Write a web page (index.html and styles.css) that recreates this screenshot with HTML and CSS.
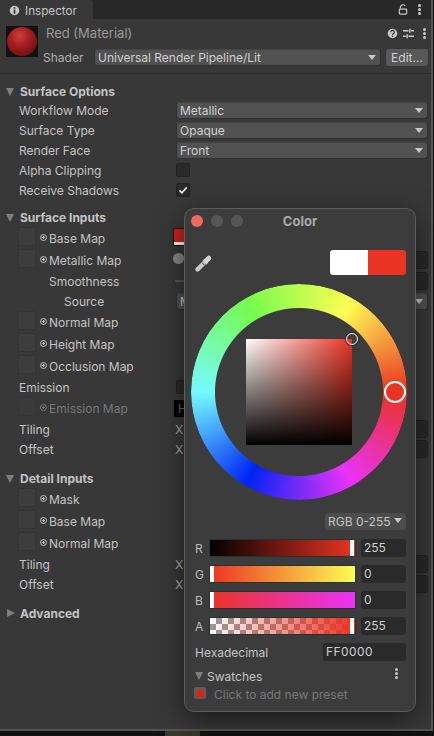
FILE: index.html
```html
<!DOCTYPE html>
<html lang="en">
<head>
    <meta charset="UTF-8">
    <title>Inspector</title>
    <link rel="stylesheet" href="styles.css">
</head>
<body>

<div class="panel">
    <div class="tabbar">
        <div class="tab">
            <svg class="tab-icon" viewBox="0 0 12 12"><circle cx="6" cy="6" r="5.2" fill="#c8c8c8"/><rect x="5.1" y="2.3" width="1.8" height="1.8" fill="#333"/><rect x="5.1" y="5" width="1.8" height="4.6" fill="#333"/></svg>
            <span>Inspector</span>
        </div>
        <div class="tab-tools">
            <svg class="lock" viewBox="0 0 10 12"><path d="M2.2 5V3.4a2.8 2.8 0 0 1 5.2-1.2" fill="none" stroke="#c8c8c8" stroke-width="1.3"/><rect x="1" y="5.6" width="8" height="5.4" rx=".8" fill="none" stroke="#c8c8c8" stroke-width="1.3"/></svg>
            <div class="dots"><i></i><i></i><i></i></div>
        </div>
    </div>

    <div class="mat-header">
        <div class="preview"><div class="ball"></div></div>
        <div class="mat-main">
            <div class="mat-title">
                <span>Red (Material)</span>
                <div class="mat-tools">
                    <svg class="help" viewBox="0 0 12 12"><circle cx="6" cy="6" r="5.2" fill="#c8c8c8"/><path d="M4.2 4.7a1.9 1.9 0 1 1 2.7 1.6c-.6.3-.9.6-.9 1.2" fill="none" stroke="#333" stroke-width="1.3"/><rect x="5.3" y="8.2" width="1.4" height="1.4" fill="#333"/></svg>
                    <svg class="sliders" viewBox="0 0 12 12"><path d="M0 3h6M9 3h3M0 9h3M6 9h6" stroke="#c8c8c8" stroke-width="1.6"/><path d="M7.5 .8v4.4M4.5 6.8v4.4" stroke="#c8c8c8" stroke-width="1.6"/></svg>
                    <div class="dots"><i></i><i></i><i></i></div>
                </div>
            </div>
            <div class="shader-row">
                <span class="shader-label">Shader</span>
                <div class="dropdown shader-drop">Universal Render Pipeline/Lit<b class="arrow"></b></div>
                <div class="btn">Edit...</div>
            </div>
        </div>
    </div>

    <section class="group">
        <h3 class="foldout">Surface Options</h3>
        <div class="row"><label>Workflow Mode</label><div class="dropdown">Metallic<b class="arrow"></b></div></div>
        <div class="row"><label>Surface Type</label><div class="dropdown">Opaque<b class="arrow"></b></div></div>
        <div class="row"><label>Render Face</label><div class="dropdown">Front<b class="arrow"></b></div></div>
        <div class="row"><label>Alpha Clipping</label><div class="check"></div></div>
        <div class="row"><label>Receive Shadows</label><div class="check"><svg viewBox="0 0 10 10"><path d="M1.5 5.4l2.4 2.4 4.8-5.4" fill="none" stroke="#eee" stroke-width="1.6"/></svg></div></div>
    </section>

    <section class="group inputs">
        <h3 class="foldout">Surface Inputs</h3>
        <div class="tex-row"><div class="thumb"></div><i class="picker"></i><label>Base Map</label><div class="control"><div class="color-field"></div></div></div>
        <div class="tex-row"><div class="thumb"></div><i class="picker"></i><label>Metallic Map</label><div class="control"><i class="knob"></i><div class="num"></div></div></div>
        <div class="sub-row"><label>Smoothness</label><div class="control"><i class="track"></i><div class="num"></div></div></div>
        <div class="sub-row source"><label>Source</label><div class="dropdown">M<b class="arrow"></b></div></div>
        <div class="tex-row"><div class="thumb"></div><i class="picker"></i><label>Normal Map</label></div>
        <div class="tex-row"><div class="thumb"></div><i class="picker"></i><label>Height Map</label></div>
        <div class="tex-row"><div class="thumb"></div><i class="picker"></i><label>Occlusion Map</label></div>
        <div class="row"><label>Emission</label><div class="check"></div></div>
        <div class="tex-row dim"><div class="thumb"></div><i class="picker"></i><label>Emission Map</label><div class="control"><div class="hdr">H</div></div></div>
        <div class="row"><label>Tiling</label><div class="vec"><span>X</span><div class="num"></div></div></div>
        <div class="row"><label>Offset</label><div class="vec"><span>X</span><div class="num"></div></div></div>
    </section>

    <section class="group detail">
        <h3 class="foldout">Detail Inputs</h3>
        <div class="tex-row"><div class="thumb"></div><i class="picker"></i><label>Mask</label></div>
        <div class="tex-row"><div class="thumb"></div><i class="picker"></i><label>Base Map</label></div>
        <div class="tex-row"><div class="thumb"></div><i class="picker"></i><label>Normal Map</label></div>
        <div class="row"><label>Tiling</label><div class="vec"><span>X</span><div class="num"></div></div></div>
        <div class="row"><label>Offset</label><div class="vec"><span>X</span><div class="num"></div></div></div>
    </section>

    <section class="group advanced">
        <h3 class="foldout closed">Advanced</h3>
    </section>
</div>

<div class="strip"><i></i><i></i><i></i></div>

<div class="picker-win">
    <div class="win-title">
        <div class="lights"><i class="close"></i><i></i><i></i></div>
        <strong>Color</strong>
    </div>

    <div class="win-top">
        <svg class="dropper" viewBox="0 0 18 18">
            <path d="M2.6 15.4L10 8" stroke="#c8c8c8" stroke-width="4.4" stroke-linecap="round"/>
            <path d="M8.2 5.8l4 4" stroke="#b4b4b4" stroke-width="2.6"/>
            <path d="M11.2 6.8l2.6-2.6" stroke="#d4d4d4" stroke-width="5" stroke-linecap="round"/>
            <path d="M7 8.6l2.4 2.4" stroke="#3c3c3c" stroke-width="1"/>
        </svg>
        <div class="swatch"><i></i><i></i></div>
    </div>

    <div class="wheel">
        <div class="ring"></div>
        <i class="ring-handle"></i>
        <div class="sv"><i class="sv-handle"></i></div>
    </div>

    <div class="mode-row"><div class="mode">RGB 0-255<b class="arrow"></b></div></div>

    <div class="chan"><span>R</span><div class="bar bar-r"><i class="thumb-end"></i></div><div class="val">255</div></div>
    <div class="chan"><span>G</span><div class="bar bar-g"><i class="thumb-start"></i></div><div class="val">0</div></div>
    <div class="chan"><span>B</span><div class="bar bar-b"><i class="thumb-start"></i></div><div class="val">0</div></div>
    <div class="chan"><span>A</span><div class="bar bar-a"><i class="thumb-end"></i></div><div class="val">255</div></div>

    <div class="hex-row"><span>Hexadecimal</span><div class="val hex">FF0000</div></div>

    <div class="swatches-row">
        <b class="arrow-big"></b><span>Swatches</span>
        <div class="dots"><i></i><i></i><i></i></div>
    </div>
    <div class="preset-row"><div class="preset"><i></i></div><span>Click to add new preset</span></div>
</div>

</body>
</html>
```

FILE: styles.css
```css
* {
    box-sizing: border-box;
}
body {
    margin: 0;
    width: 434px;
    height: 736px;
    overflow: hidden;
    background: #141414;
    font-family: Inter, "Liberation Sans", sans-serif;
    font-size: 12px;
    color: #c4c4c4;
    position: relative;
}
.panel {
    height: 731px;
    width: 433px;
    background: #383838;
    border-right: 2px solid #555;
    border-bottom: 2px solid #555;
    overflow: hidden;
}
.tabbar {
    height: 19px;
    background: #282828;
    display: flex;
    justify-content: space-between;
}
.tab {
    width: 93px;
    background: #383838;
    border-top-right-radius: 3px;
    display: flex;
    align-items: center;
    gap: 5px;
    padding-left: 9px;
    padding-top: 2px;
    font-size: 11.7px;
}
.tab-icon {
    width: 11px;
    height: 11px;
}
.tab-tools {
    display: flex;
    align-items: center;
    gap: 10px;
    padding-right: 10px;
}
.lock {
    width: 10px;
    height: 11px;
}
.dots {
    display: flex;
    flex-direction: column;
    gap: 1px;
    width: 3px;
}
.dots i {
    width: 3px;
    height: 3px;
    border-radius: 50%;
    background: #c8c8c8;
}

/* material header */
.mat-header {
    height: 55px;
    display: flex;
    padding: 7px 3px 0 6px;
    border-bottom: 1px solid #2c2c2c;
}
.preview {
    width: 32px;
    height: 31px;
    background: #111;
    padding: 1px;
    flex: none;
}
.ball {
    width: 30px;
    height: 29px;
    border-radius: 50%;
    background: radial-gradient(circle at 42% 30%, #c84040 0, #a82020 35%, #7c1414 70%, #3a0808 100%);
}
.mat-main {
    flex: 1;
    margin-left: 5px;
    margin-top: -1px;
}
.mat-title {
    display: flex;
    justify-content: space-between;
    align-items: center;
    height: 16px;
    padding-left: 3px;
    font-size: 13px;
    color: #999;
}
.mat-tools {
    display: flex;
    align-items: center;
    gap: 9px;
    padding-right: 2px;
}
.help {
    width: 11px;
    height: 11px;
    margin-right: -4px;
}
.sliders {
    width: 11px;
    height: 11px;
}
.shader-row {
    display: flex;
    align-items: center;
    margin-top: 8px;
}
.shader-label {
    width: 51px;
    flex: none;
    color: #b0b0b0;
}
.shader-drop {
    flex: 1;
}
.btn {
    width: 42px;
    height: 17px;
    margin-left: 5px;
    background: #585858;
    border-radius: 3px;
    text-align: center;
    line-height: 17px;
    color: #d0d0d0;
    flex: none;
}
.dropdown {
    flex: 1;
    height: 17px;
    background: #515151;
    border: 1px solid #303030;
    border-top-color: #444;
    border-radius: 3px;
    padding-left: 3px;
    line-height: 15px;
    color: #d0d0d0;
    position: relative;
}
.arrow {
    position: absolute;
    right: 4px;
    top: 5px;
    border-left: 4px solid transparent;
    border-right: 4px solid transparent;
    border-top: 5px solid #c8c8c8;
}

/* property rows */
.group {
    padding: 10px 3px 0 6px;
}
.foldout {
    margin: 0;
    height: 16px;
    line-height: 16px;
    font-size: 12px;
    font-weight: 700;
    color: #c4c4c4;
    padding-left: 14px;
    position: relative;
}
.foldout::before {
    content: "";
    position: absolute;
    left: 0;
    top: 4px;
    border-left: 4.5px solid transparent;
    border-right: 4.5px solid transparent;
    border-top: 8px solid #7e7e7e;
}
.foldout.closed::before {
    top: 3px;
    left: 1px;
    border-top: 4.5px solid transparent;
    border-bottom: 4.5px solid transparent;
    border-left: 8px solid #7e7e7e;
    border-right: 0;
}
.row, .tex-row, .sub-row {
    display: flex;
    align-items: center;
    padding-left: 13px;
}
.row {
    height: 20px;
}
.row label {
    width: 157px;
    flex: none;
}
.tex-row {
    height: 22px;
}
.tex-row .thumb {
    width: 18px;
    height: 19px;
    margin: -3px 0 0 -1px;
    background: #3d3d3d;
    border: 1px solid #343434;
    flex: none;
}
.picker {
    width: 7px;
    height: 7px;
    border: 1px solid #c4c4c4;
    border-radius: 50%;
    background: radial-gradient(circle, #c4c4c4 0 1.2px, transparent 1.4px);
    margin: -1px 2px 0 4px;
    flex: none;
}
.tex-row label {
    width: 127px;
    flex: none;
}
.tex-row.dim label {
    color: #777;
}
.tex-row.dim .picker {
    border-color: #777;
    background: radial-gradient(circle, #777 0 1.2px, transparent 1.4px);
}
.tex-row.dim .thumb {
    opacity: .5;
}
.sub-row {
    height: 20px;
}
.sub-row label {
    width: 157px;
    padding-left: 30px;
    flex: none;
}
.sub-row.source label {
    padding-left: 45px;
}
.control {
    flex: 1;
    display: flex;
    align-items: center;
    justify-content: space-between;
}
.color-field {
    width: 20px;
    height: 18px;
    margin: -3px 0 0 -3px;
    background: linear-gradient(#c8241c 0 13px, #fff 13px);
    border: 1px solid #111;
}
.knob {
    width: 11px;
    height: 11px;
    margin: -3px 0 0 -3px;
    border-radius: 50%;
    background: #8a8a8a;
}
.track {
    width: 10px;
    height: 2px;
    margin-left: -1px;
    background: #555;
}
.num {
    width: 60px;
    height: 18px;
    background: #2a2a2a;
    border: 1px solid #212121;
    border-radius: 3px;
}
.hdr {
    width: 24px;
    height: 17px;
    margin-left: -2px;
    background: #000;
    color: #666;
    line-height: 17px;
    padding-left: 4px;
}
.vec {
    flex: 1;
    display: flex;
    align-items: center;
    justify-content: space-between;
    margin-left: -1px;
}
.vec span {
    color: #aaa;
}
.inputs .foldout {
    margin-bottom: 1px;
}
.detail {
    padding-top: 12px;
}
.detail .foldout {
    margin-bottom: 1px;
}
.advanced {
    padding-top: 12px;
}
.check {
    width: 14px;
    height: 14px;
    background: #2a2a2a;
    border: 1px solid #222;
    border-radius: 2px;
    padding: 1px;
}
.check svg {
    display: block;
    width: 10px;
    height: 10px;
}

.strip {
    height: 5px;
    display: flex;
}
.strip i {
    display: block;
    background: #111;
}
.strip i:nth-child(1) {
    width: 165px;
}
.strip i:nth-child(2) {
    width: 35px;
    background: #39382f;
}
.strip i:nth-child(3) {
    flex: 1;
}

/* colour window, sits over the inspector */
.picker-win {
    position: absolute;
    left: 184px;
    top: 208px;
    width: 232px;
    height: 504px;
    background: #3c3c3c;
    border: 1px solid #5c5c5c;
    border-radius: 10px;
    box-shadow: 0 8px 28px rgba(0, 0, 0, .55);
    padding: 0 10px;
}
.win-title {
    height: 24px;
    display: grid;
    grid-template-columns: 1fr auto 1fr;
    align-items: center;
    margin: 0 -10px;
    padding: 0 6px;
}
.win-title strong {
    grid-column: 2;
    color: #a8a8a8;
    font-size: 13px;
}
.lights {
    grid-column: 1;
    grid-row: 1;
    display: flex;
    gap: 8px;
}
.lights i {
    width: 12px;
    height: 12px;
    border-radius: 50%;
    background: #565656;
}
.lights .close {
    background: #ee6a5f;
}
.win-top {
    display: flex;
    justify-content: space-between;
    align-items: center;
    height: 25px;
    margin-top: 17px;
    margin-right: -1px;
}
.dropper {
    width: 18px;
    height: 18px;
}
.swatch {
    width: 76px;
    height: 25px;
    display: flex;
    border-radius: 3px;
    overflow: hidden;
}
.swatch i {
    width: 50%;
    background: #fff;
}
.swatch i + i {
    background: #ea3323;
}
.wheel {
    position: relative;
    width: 216px;
    height: 216px;
    margin: 9px 0 0 -4px;
    display: flex;
    align-items: center;
    justify-content: center;
}
.ring {
    position: absolute;
    inset: 0;
    border-radius: 50%;
    background: conic-gradient(from 90deg, #ea3323, #ea33f7, #0023f5, #75fbfd, #75fb4c, #fffd54, #ea3323);
    -webkit-mask: radial-gradient(circle, transparent 83.5px, #000 84.5px);
    mask: radial-gradient(circle, transparent 83.5px, #000 84.5px);
}
.ring-handle {
    position: absolute;
    left: 193px;
    top: 97px;
    width: 22px;
    height: 22px;
    border: 2px solid #fff;
    border-radius: 50%;
    background: #ea3323;
}
.sv {
    position: relative;
    width: 106px;
    height: 106px;
    background: linear-gradient(to top, #000, transparent), linear-gradient(to right, #fff, #ea3323);
}
.sv-handle {
    position: absolute;
    right: -6px;
    top: -6px;
    width: 12px;
    height: 12px;
    border: 1.5px solid #fff;
    border-radius: 50%;
    box-shadow: 0 0 0 1px #222;
}
.mode-row {
    display: flex;
    justify-content: flex-end;
    margin-top: 13px;
    margin-right: -1px;
}
.mode {
    width: 81px;
    height: 17px;
    background: #4c4c4c;
    border-radius: 3px;
    line-height: 17px;
    padding-left: 3px;
    position: relative;
}
.chan {
    display: flex;
    align-items: center;
    height: 26px;
    margin-right: -1px;
}
.mode-row + .chan {
    margin-top: 5px;
}
.chan span {
    width: 14px;
    flex: none;
    color: #bbb;
}
.bar {
    width: 147px;
    height: 18px;
    position: relative;
    flex: none;
    border: 1px solid #243434;
}
.bar-r {
    background: linear-gradient(to right, #000, #ea3323);
}
.bar-g {
    background: linear-gradient(to right, #ea3323, #fffd54);
}
.bar-b {
    background: linear-gradient(to right, #ea3323, #ea33f7);
}
.bar-a {
    background: linear-gradient(to right, transparent, #ea3323), repeating-conic-gradient(#999 0 25%, #fff 0 50%) 0 0 / 12px 12px;
}
.thumb-start, .thumb-end {
    position: absolute;
    top: 0;
    bottom: 0;
    width: 4px;
    background: #fff;
}
.thumb-start {
    left: 0;
}
.thumb-end {
    right: 1px;
}
.val {
    margin-left: auto;
    width: 45px;
    height: 18px;
    background: #2a2a2a;
    border-radius: 3px;
    line-height: 18px;
    padding-left: 3px;
    color: #d0d0d0;
}
.hex-row {
    display: flex;
    align-items: center;
    height: 26px;
    margin-right: -1px;
}
.hex-row .hex {
    width: 83px;
    letter-spacing: .4px;
}
.swatches-row {
    display: flex;
    align-items: center;
    height: 22px;
}
.arrow-big {
    border-left: 4.5px solid transparent;
    border-right: 4.5px solid transparent;
    border-top: 8px solid #7e7e7e;
    margin-right: 4px;
}
.swatches-row .dots {
    margin-left: auto;
    margin-right: 7px;
    margin-top: -5px;
}
.preset-row {
    display: flex;
    align-items: center;
    gap: 8px;
    color: #777;
    height: 15px;
}
.preset {
    width: 12px;
    height: 12px;
    margin: -3px 0 0 -1px;
    background: #5c5c5c;
    border-radius: 2px;
    padding: 2.5px;
}
.preset i {
    display: block;
    width: 7px;
    height: 7px;
    background: #ea1c10;
}
```
